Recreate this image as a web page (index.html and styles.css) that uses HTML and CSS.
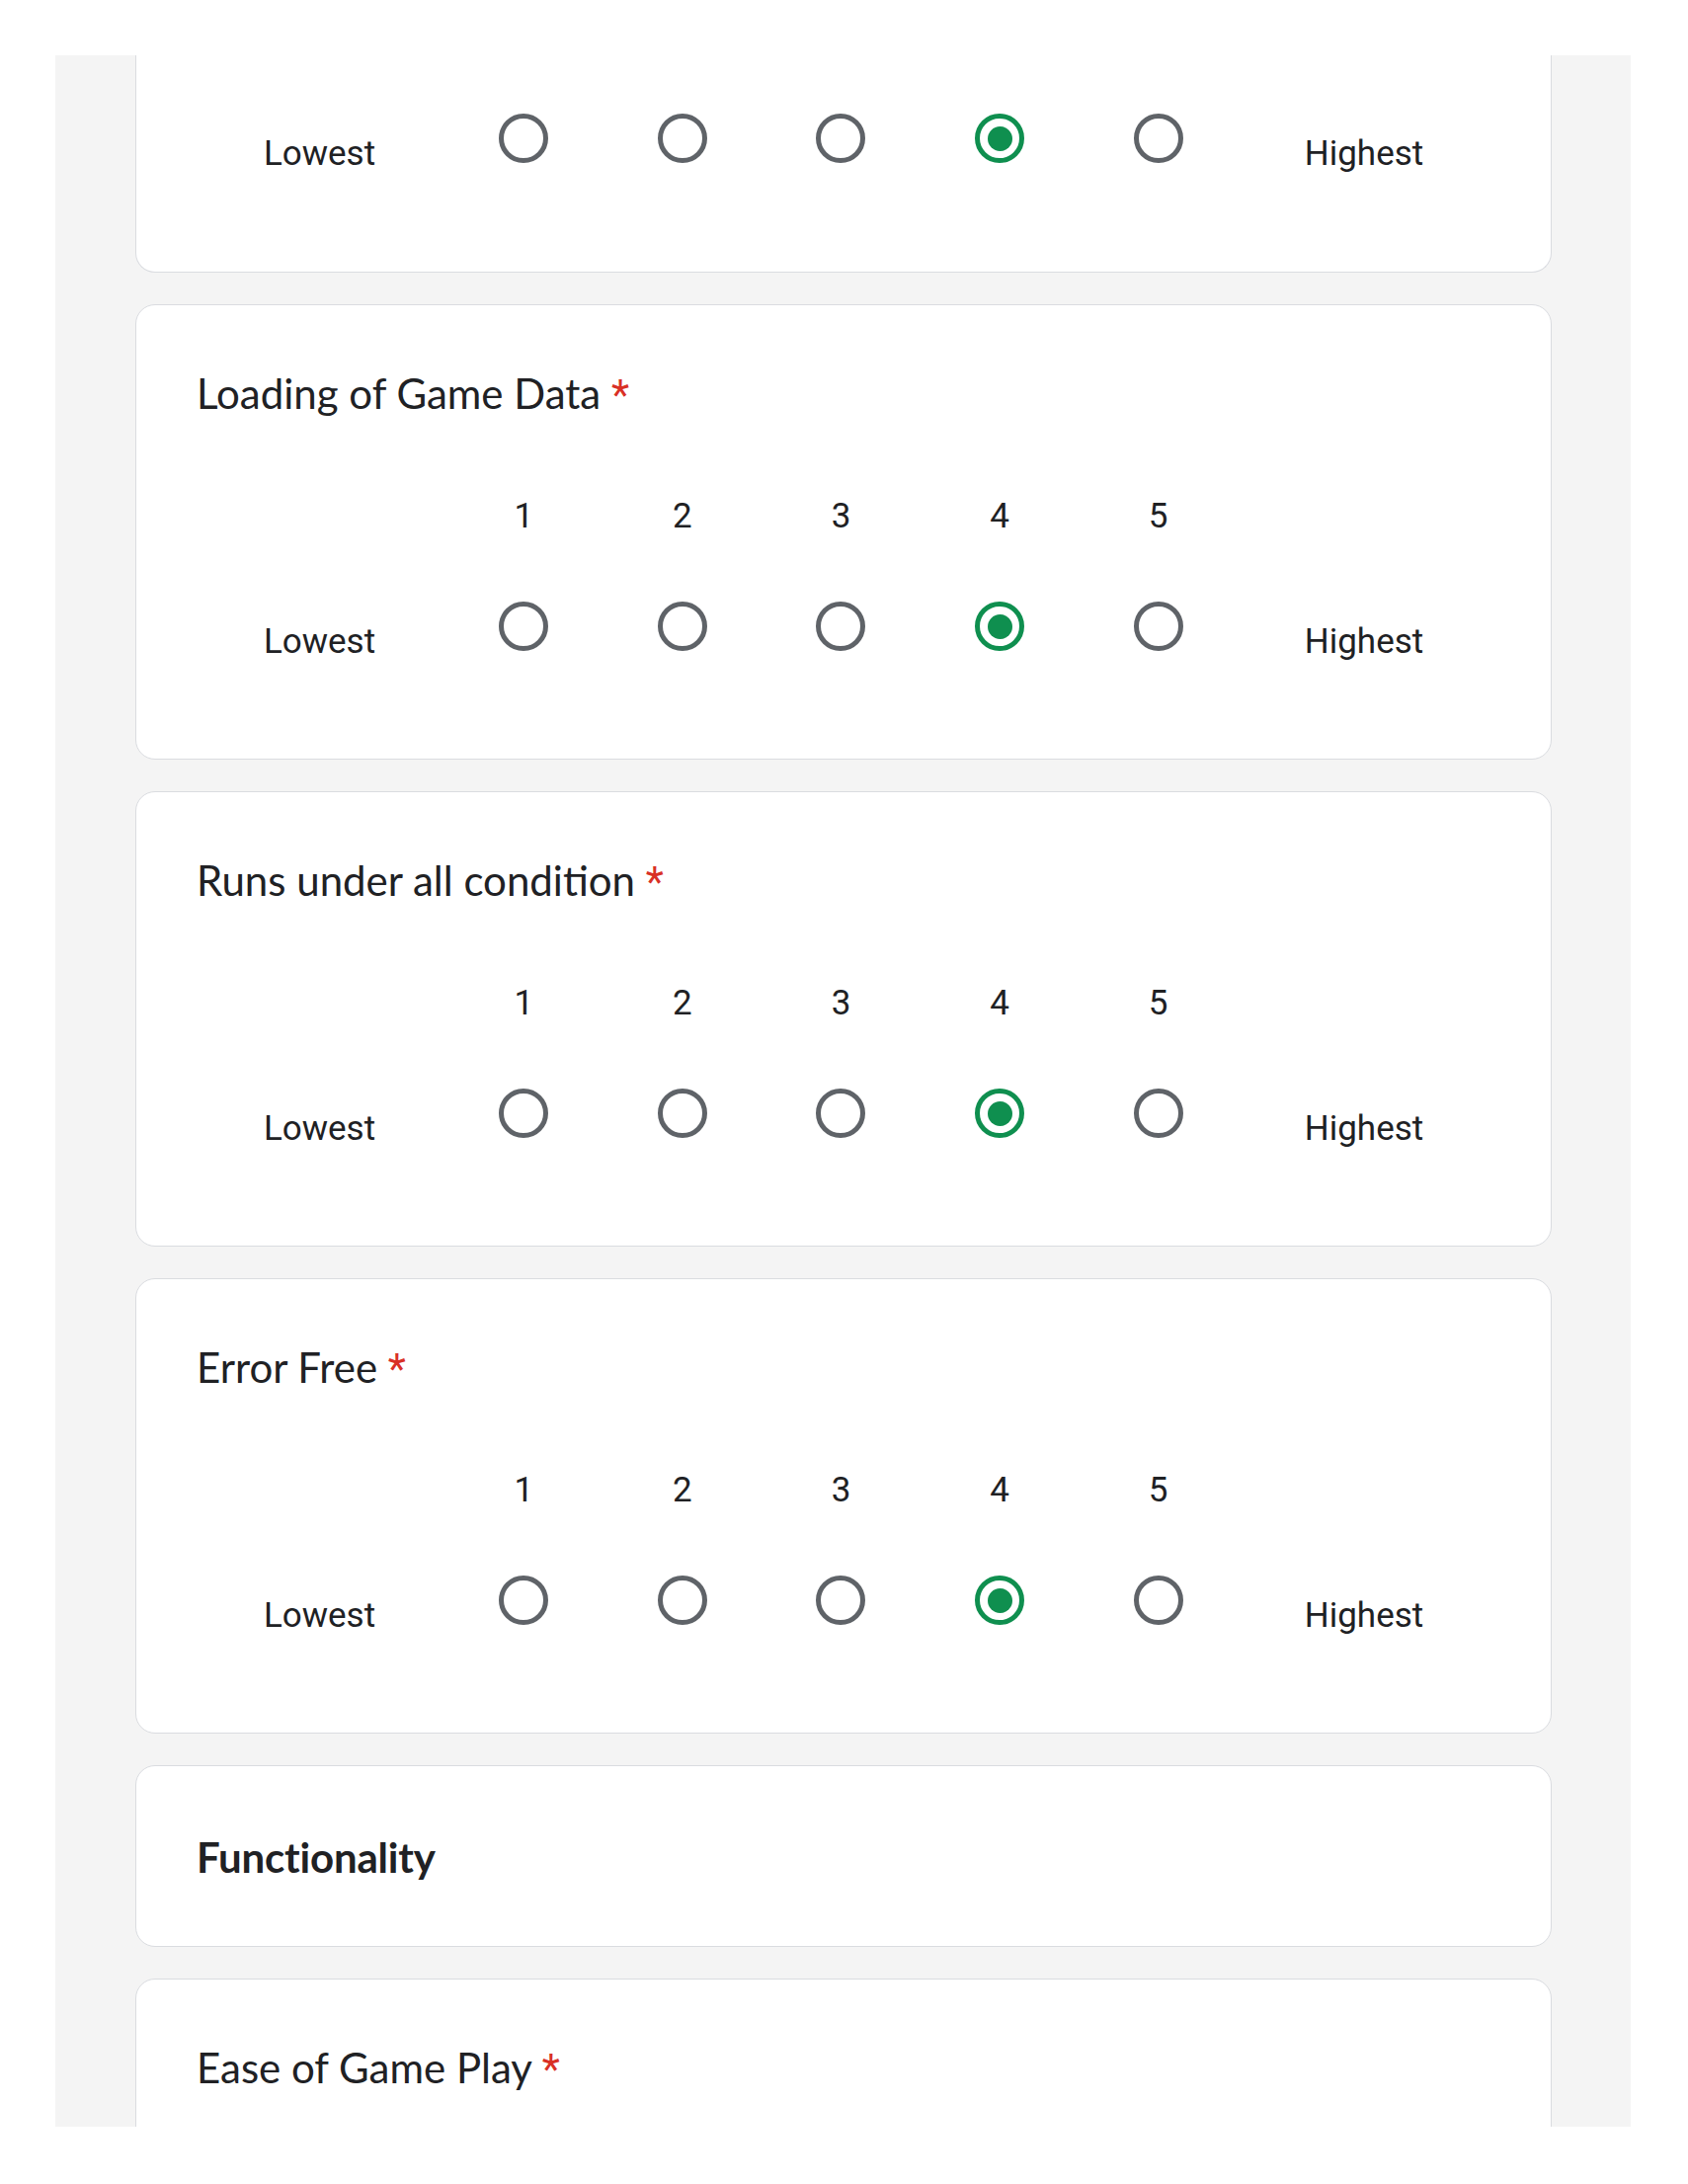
FILE: index.html
```html
<!DOCTYPE html>
<html lang="en">
<head>
<meta charset="utf-8">
<title>Form</title>
<link rel="stylesheet" href="styles.css">
</head>
<body>
<div class="viewport">
  <div class="list">
    <section class="card partial">
      <div class="scale only-radios">
        <div class="lbl lo">Lowest</div>
        <div class="rcell c1"><span class="radio"></span></div>
        <div class="rcell c2"><span class="radio"></span></div>
        <div class="rcell c3"><span class="radio"></span></div>
        <div class="rcell c4"><span class="radio on"></span></div>
        <div class="rcell c5"><span class="radio"></span></div>
        <div class="lbl hi">Highest</div>
      </div>
    </section>

    <section class="card question">
      <div class="q-title">Loading of Game Data <span class="req">*</span></div>
      <div class="scale">
        <div class="num c1">1</div><div class="num c2">2</div><div class="num c3">3</div><div class="num c4">4</div><div class="num c5">5</div>
        <div class="lbl lo">Lowest</div>
        <div class="rcell c1"><span class="radio"></span></div>
        <div class="rcell c2"><span class="radio"></span></div>
        <div class="rcell c3"><span class="radio"></span></div>
        <div class="rcell c4"><span class="radio on"></span></div>
        <div class="rcell c5"><span class="radio"></span></div>
        <div class="lbl hi">Highest</div>
      </div>
    </section>

    <section class="card question">
      <div class="q-title">Runs under all condition <span class="req">*</span></div>
      <div class="scale">
        <div class="num c1">1</div><div class="num c2">2</div><div class="num c3">3</div><div class="num c4">4</div><div class="num c5">5</div>
        <div class="lbl lo">Lowest</div>
        <div class="rcell c1"><span class="radio"></span></div>
        <div class="rcell c2"><span class="radio"></span></div>
        <div class="rcell c3"><span class="radio"></span></div>
        <div class="rcell c4"><span class="radio on"></span></div>
        <div class="rcell c5"><span class="radio"></span></div>
        <div class="lbl hi">Highest</div>
      </div>
    </section>

    <section class="card question">
      <div class="q-title">Error Free <span class="req">*</span></div>
      <div class="scale">
        <div class="num c1">1</div><div class="num c2">2</div><div class="num c3">3</div><div class="num c4">4</div><div class="num c5">5</div>
        <div class="lbl lo">Lowest</div>
        <div class="rcell c1"><span class="radio"></span></div>
        <div class="rcell c2"><span class="radio"></span></div>
        <div class="rcell c3"><span class="radio"></span></div>
        <div class="rcell c4"><span class="radio on"></span></div>
        <div class="rcell c5"><span class="radio"></span></div>
        <div class="lbl hi">Highest</div>
      </div>
    </section>

    <section class="card section-head">
      <div class="s-title">Functionality</div>
    </section>

    <section class="card question last">
      <div class="q-title">Ease of Game Play <span class="req">*</span></div>
    </section>
  </div>
</div>
</body>
</html>
```

FILE: styles.css
```css
html, body {
  margin: 0;
  padding: 0;
  background: #ffffff;
}

body {
  font-family: Roboto, "Liberation Sans", Arial, sans-serif;
  color: #202124;
}

.viewport {
  margin: 56px 0 0 56px;
  width: 1595px;
  height: 2097px;
  background: #f4f4f4;
  overflow: hidden;
}

.list {
  display: flex;
  flex-direction: column;
  gap: 32px;
  padding: 0 80px 0 81px;
}

.card {
  background: #ffffff;
  border: 1px solid #dadce0;
  border-radius: 20px;
  padding: 0 61px;
  box-sizing: border-box;
  flex-shrink: 0;
}

.partial {
  border-top: none;
  border-radius: 0 0 20px 20px;
  height: 220px;
}

.question {
  padding-top: 59px;
  height: 461px;
}

.last {
  height: 300px;
}

.q-title,
.s-title {
  font-family: Lato, "Open Sans", sans-serif;
  font-size: 42px;
  line-height: 60px;
  color: #202124;
}

.s-title {
  font-weight: 700;
  letter-spacing: -0.2px;
}

.req {
  font-family: Roboto, sans-serif;
  color: #d93025;
}

.section-head {
  height: 184px;
  padding-top: 62px;
}

.scale {
  display: grid;
  grid-template-columns: 251px repeat(5, 160.6px) 1fr;
  grid-template-rows: 50px 126px;
  margin-top: 68px;
}

.scale.only-radios {
  grid-template-rows: 126px;
  margin-top: -2px;
}

.num {
  grid-row: 1;
  font-size: 35px;
  line-height: 50px;
  text-align: center;
}

.c1 { grid-column: 2; }
.c2 { grid-column: 3; }
.c3 { grid-column: 4; }
.c4 { grid-column: 5; }
.c5 { grid-column: 6; }

.lbl {
  grid-row: 2;
  font-size: 35px;
  line-height: 50px;
  padding-top: 77px;
  text-align: center;
}

.lo { grid-column: 1; padding-right: 2px; }
.hi { grid-column: 7; }

.rcell {
  grid-row: 2;
  padding-top: 61px;
  display: flex;
  justify-content: center;
  align-items: flex-start;
}

.only-radios .lbl,
.only-radios .rcell {
  grid-row: 1;
}

.radio {
  display: block;
  width: 50px;
  height: 50px;
  box-sizing: border-box;
  border: 5px solid #5f6368;
  border-radius: 50%;
  position: relative;
}

.radio.on {
  border-color: #0f8f4f;
}

.radio.on::after {
  content: "";
  position: absolute;
  left: 7.5px;
  top: 7.5px;
  width: 25px;
  height: 25px;
  border-radius: 50%;
  background: #0f8f4f;
}
```
